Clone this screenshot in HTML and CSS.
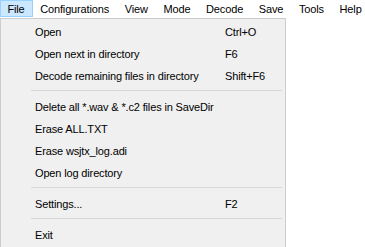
FILE: index.html
```html
<!DOCTYPE html>
<html>
<head>
<meta charset="utf-8">
<link rel="stylesheet" href="styles.css">
</head>
<body>
<div class="menubar">
  <span class="top active">File</span>
  <span class="top">Configurations</span>
  <span class="top">View</span>
  <span class="top">Mode</span>
  <span class="top">Decode</span>
  <span class="top">Save</span>
  <span class="top">Tools</span>
  <span class="top">Help</span>
</div>
<div class="dropdown">
  <div class="item"><span class="label">Open</span><span class="key">Ctrl+O</span></div>
  <div class="item"><span class="label">Open next in directory</span><span class="key">F6</span></div>
  <div class="item"><span class="label">Decode remaining files in directory</span><span class="key">Shift+F6</span></div>
  <div class="sep"></div>
  <div class="item"><span class="label">Delete all *.wav &amp; *.c2 files in SaveDir</span></div>
  <div class="item"><span class="label">Erase ALL.TXT</span></div>
  <div class="item"><span class="label">Erase wsjtx_log.adi</span></div>
  <div class="item"><span class="label">Open log directory</span></div>
  <div class="sep"></div>
  <div class="item"><span class="label">Settings...</span><span class="key">F2</span></div>
  <div class="sep"></div>
  <div class="item"><span class="label">Exit</span></div>
</div>
</body>
</html>
```
FILE: styles.css
```css
html, body {
  margin: 0;
  padding: 0;
  background: #ffffff;
  overflow: hidden;
}
body {
  font-family: "Liberation Sans", Arial, sans-serif;
  font-size: 11px;
  letter-spacing: -0.15px;
  color: #000;
  width: 365px;
  height: 247px;
  white-space: nowrap;
}
.menubar {
  display: flex;
  height: 17px;
  align-items: stretch;
  background: #fff;
}
.top {
  display: flex;
  align-items: center;
  padding: 0 7.3px 0 6.4px;
  border: 1px solid transparent;
  box-sizing: border-box;
}
.top.active {
  background: #cce8ff;
  border-color: #99d1ff;
}
.dropdown {
  margin-top: 1px;
  width: 286px;
  box-sizing: border-box;
  background: #f0f0f0;
  border: 1px solid #cccccc;
  border-bottom: none;
  padding: 2px 2px 0 2px;
  height: 229px;
}
.item {
  display: flex;
  height: 22px;
  align-items: center;
}
.label {
  padding-left: 32px;
  width: 190px;
  flex: none;
}
.key {
  flex: none;
}
.sep {
  height: 9px;
  box-sizing: border-box;
  padding-top: 3px;
  padding-left: 28px;
  padding-right: 1px;
}
.sep::after {
  content: "";
  display: block;
  height: 1px;
  background: #d7d7d7;
}
```
